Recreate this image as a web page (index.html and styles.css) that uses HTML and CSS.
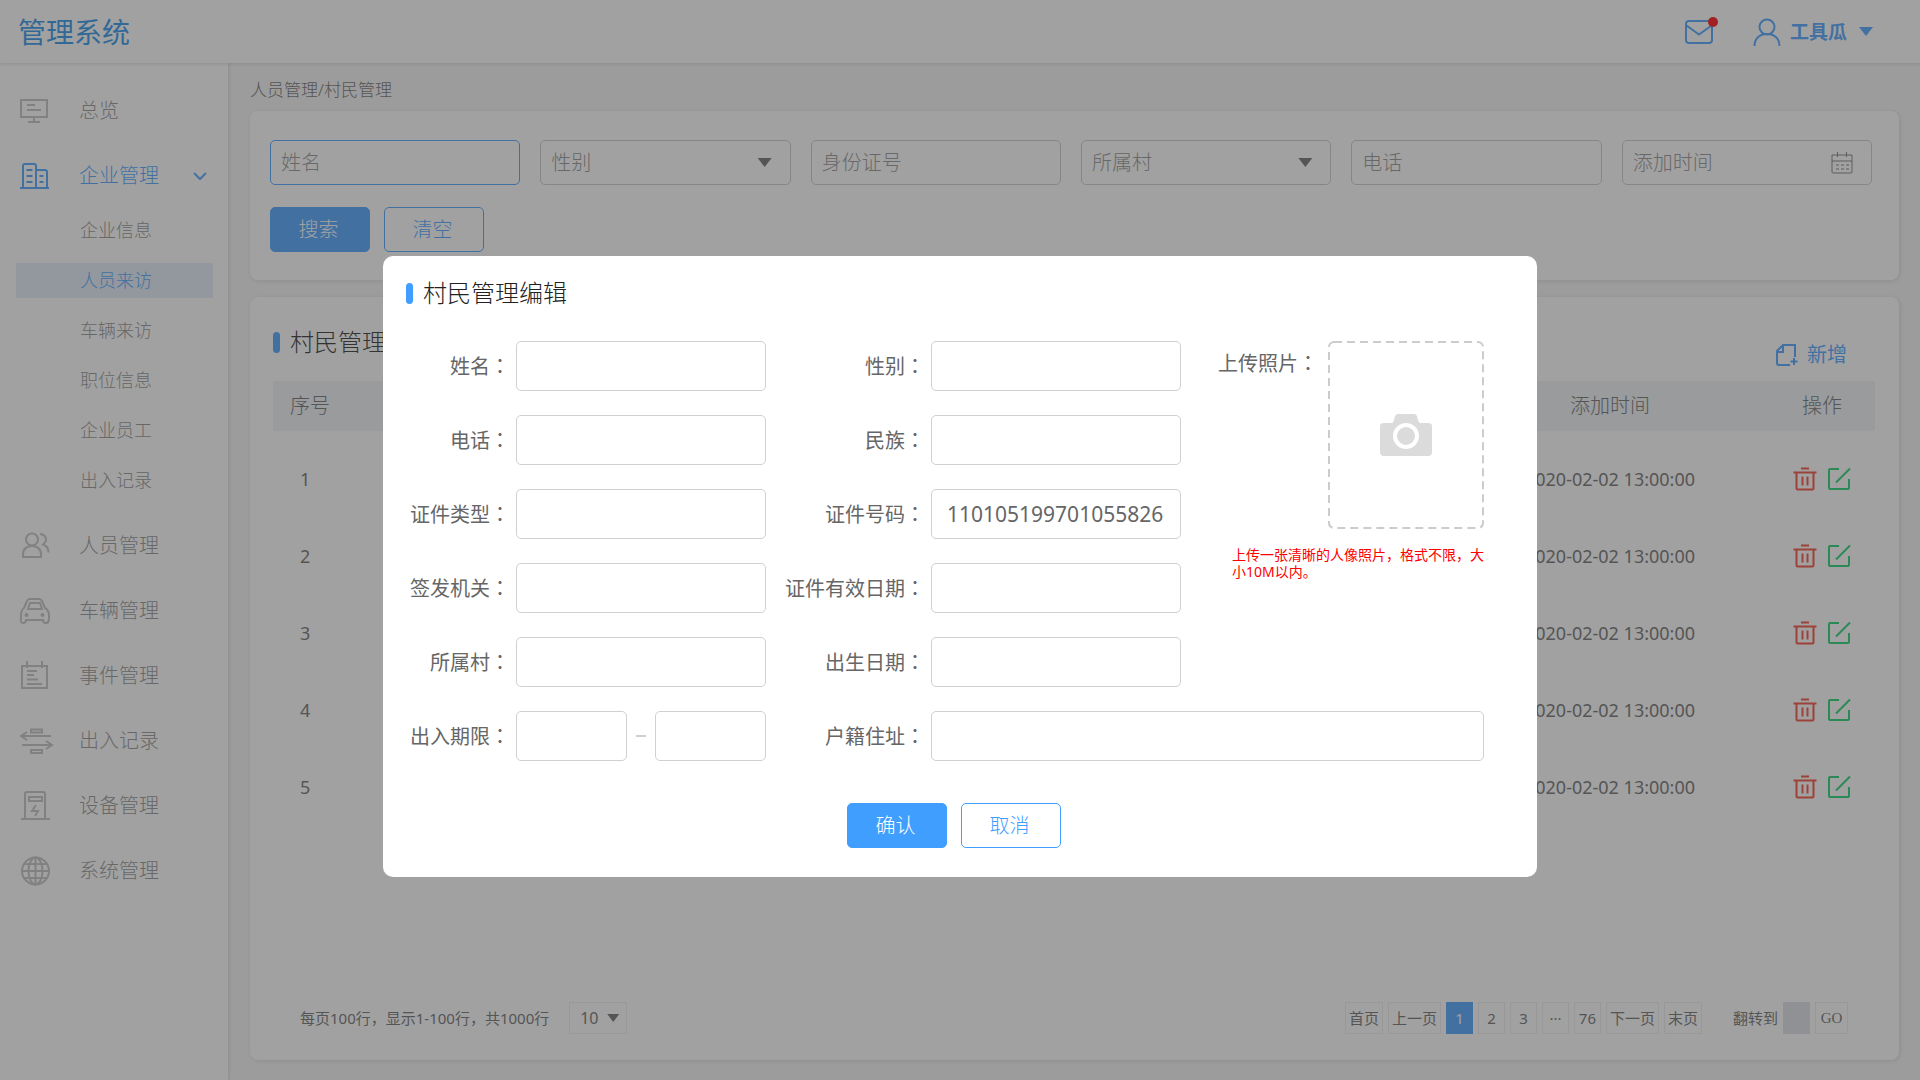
FILE: index.html
```html
<!DOCTYPE html>
<html lang="zh-CN">
<head>
<meta charset="utf-8">
<meta name="viewport" content="width=device-width, initial-scale=1">
<title>管理系统</title>
<link rel="stylesheet" href="styles.css">
</head>
<body>
<svg class="sprite" aria-hidden="true">
  <symbol id="i-trash" viewBox="0 0 24 24"><path d="M.5 5.500h23M8 1.500h8M3.500 5.500v16a1 1 0 0 0 1 1h15a1 1 0 0 0 1-1v-16M9.500 9.500v9M14.500 9.500v9"/></symbol>
  <symbol id="i-edit" viewBox="0 0 24 24"><path d="M12 2H3a1 1 0 0 0-1 1v18a1 1 0 0 0 1 1h18a1 1 0 0 0 1-1v-9M9 15.500 23 1.500"/></symbol>
</svg>

<header class="topbar">
  <a class="brand" href="#">管理系统</a>
  <div class="topbar-tools">
    <button class="mail" type="button" aria-label="消息">
      <svg width="28" height="24" viewBox="0 0 28 24"><rect x="1" y="1" width="26" height="22" rx="3"/><path d="m1.500 5.500 12.500 9 12.500-9"/></svg>
      <span class="mail-dot"></span>
    </button>
    <button class="user" type="button">
      <svg width="28" height="28" viewBox="0 0 28 28"><circle cx="14" cy="9" r="7.500"/><path d="M1.500 28c0-7.500 5-12 12.500-12s12.500 4.500 12.500 12"/></svg>
      <span>工具瓜</span>
      <i class="caret"></i>
    </button>
  </div>
</header>

<div class="shell">
  <nav class="sidebar">
    <ul class="menu">
      <li><a class="menu-item" href="#">
        <svg viewBox="0 0 30 30"><path d="M1 4h26v17H1zM7 9h8M7 14h14M14 21v4M8 26h12"/></svg>总览</a></li>
      <li><a class="menu-item active" href="#">
        <svg viewBox="0 0 30 30"><path d="M0 27h29M3 27V5a2 2 0 0 1 2-2h9a2 2 0 0 1 2 2v22M16 9h9a2 2 0 0 1 2 2v16M6.500 9h6M6.500 15h6M6.500 21h6M19.500 15h4M19.500 21h4"/></svg>企业管理
        <svg class="chevron" viewBox="0 0 14 8"><path d="m1 1 6 6 6-6"/></svg></a>
        <ul class="submenu">
          <li><a href="#">企业信息</a></li>
          <li><a class="current" href="#">人员来访</a></li>
          <li><a href="#">车辆来访</a></li>
          <li><a href="#">职位信息</a></li>
          <li><a href="#">企业员工</a></li>
          <li><a href="#">出入记录</a></li>
        </ul>
      </li>
      <li><a class="menu-item" href="#">
        <svg viewBox="0 0 30 30"><circle cx="12" cy="8.500" r="6"/><path d="M3 26v-3c0-5 4-8 9-8s9 3 9 8v3zM20 3c4 .5 6 2.500 6 5.500s-2 4-3 5c3 1 5.500 4 5.500 8"/></svg>人员管理</a></li>
      <li><a class="menu-item" href="#">
        <svg viewBox="0 0 30 30"><path d="M4 12 7 5q1-2 3-2h9q2 0 3 2l3 7q4 2 4 8v2q0 5-3 5t-3-3H6q0 3-3 3T1 22v-2q0-6 3-8zM10 7h10l2 6H8z"/><circle cx="6.500" cy="19" r="1"/><circle cx="22.500" cy="19" r="1"/></svg>车辆管理</a></li>
      <li><a class="menu-item" href="#">
        <svg viewBox="0 0 30 30"><path d="M2 5h25v22H2zM7 0v7M22 0v7M7 10h10M7 14h7M7 18.500h11M7 23h15"/></svg>事件管理</a></li>
      <li><a class="menu-item" href="#">
        <svg viewBox="0 0 30 30"><path d="M31 10H1M7 6l-6 4 6 4M2 19h30M26 15l6 4-6 4M11 3.500h11v3H11zM11 24h11v3H11z"/></svg>出入记录</a></li>
      <li><a class="menu-item" href="#">
        <svg viewBox="0 0 30 30"><path d="M1 28h29M5 28V3a2 2 0 0 1 2-2h16a2 2 0 0 1 2 2v25M9 6h13v4H9zM16 14l-4 6h6l-3 5"/></svg>设备管理</a></li>
      <li><a class="menu-item" href="#">
        <svg viewBox="0 0 30 30"><circle cx="15.500" cy="15" r="13.500"/><ellipse cx="15.500" cy="15" rx="7" ry="13.500"/><path d="M15.500 1.500v27M2 15h27M4 8h23M4 22h23"/></svg>系统管理</a></li>
    </ul>
  </nav>

  <main class="content">
    <div class="breadcrumb">人员管理/村民管理</div>

    <form class="panel filters">
      <div class="filter-grid">
        <input class="field focused" type="text" placeholder="姓名" aria-label="姓名">
        <div class="field-wrap">
          <select class="field" aria-label="性别"><option>性别</option></select>
          <i class="caret dark"></i>
        </div>
        <input class="field" type="text" placeholder="身份证号" aria-label="身份证号">
        <div class="field-wrap">
          <select class="field" aria-label="所属村"><option>所属村</option></select>
          <i class="caret dark"></i>
        </div>
        <input class="field" type="text" placeholder="电话" aria-label="电话">
        <div class="field-wrap">
          <input class="field" type="text" placeholder="添加时间" aria-label="添加时间">
          <svg class="calendar" width="22" height="22" viewBox="0 0 22 22"><path d="M1 3h20v17a1 1 0 0 1-1 1H2a1 1 0 0 1-1-1zM1 9h20M6.500 0v5M15.500 0v5"/><path d="M5 13h13M5 17h13" stroke-dasharray="3 2"/></svg>
        </div>
      </div>
      <div class="button-row">
        <button class="btn primary" type="button">搜索</button>
        <button class="btn" type="button">清空</button>
      </div>
    </form>

    <section class="panel list">
      <h2 class="heading">村民管理</h2>
      <div class="list-tools">
        <button class="add" type="button">
          <svg width="22" height="22" viewBox="0 0 22 22"><path d="M14 21H3a2 2 0 0 1-2-2V7l6-6h12v12M1 8h6V1M18 14v7M14.500 17.500h7"/></svg>新增
        </button>
      </div>
      <table class="grid">
        <colgroup><col class="c-no"><col><col class="c-time"><col class="c-op"></colgroup>
        <thead><tr><th class="no">序号</th><th></th><th>添加时间</th><th class="op">操作</th></tr></thead>
        <tbody>
          <tr><td class="no">1</td><td></td><td>2020-02-02 13:00:00</td><td class="op"><div class="ops"><button class="icon-btn del" type="button" aria-label="删除"><svg><use href="#i-trash"/></svg></button><button class="icon-btn edit" type="button" aria-label="编辑"><svg><use href="#i-edit"/></svg></button></div></td></tr>
          <tr><td class="no">2</td><td></td><td>2020-02-02 13:00:00</td><td class="op"><div class="ops"><button class="icon-btn del" type="button" aria-label="删除"><svg><use href="#i-trash"/></svg></button><button class="icon-btn edit" type="button" aria-label="编辑"><svg><use href="#i-edit"/></svg></button></div></td></tr>
          <tr><td class="no">3</td><td></td><td>2020-02-02 13:00:00</td><td class="op"><div class="ops"><button class="icon-btn del" type="button" aria-label="删除"><svg><use href="#i-trash"/></svg></button><button class="icon-btn edit" type="button" aria-label="编辑"><svg><use href="#i-edit"/></svg></button></div></td></tr>
          <tr><td class="no">4</td><td></td><td>2020-02-02 13:00:00</td><td class="op"><div class="ops"><button class="icon-btn del" type="button" aria-label="删除"><svg><use href="#i-trash"/></svg></button><button class="icon-btn edit" type="button" aria-label="编辑"><svg><use href="#i-edit"/></svg></button></div></td></tr>
          <tr><td class="no">5</td><td></td><td>2020-02-02 13:00:00</td><td class="op"><div class="ops"><button class="icon-btn del" type="button" aria-label="删除"><svg><use href="#i-trash"/></svg></button><button class="icon-btn edit" type="button" aria-label="编辑"><svg><use href="#i-edit"/></svg></button></div></td></tr>
        </tbody>
      </table>
      <footer class="list-foot">
        <span class="summary">每页100行，显示1-100行，共1000行</span>
        <div class="page-size">
          <select aria-label="每页行数"><option>10</option></select>
          <i class="caret dark"></i>
        </div>
        <div class="pager">
          <button class="page" type="button">首页</button>
          <button class="page" type="button">上一页</button>
          <button class="page on" type="button">1</button>
          <button class="page" type="button">2</button>
          <button class="page" type="button">3</button>
          <button class="page" type="button">···</button>
          <button class="page" type="button">76</button>
          <button class="page" type="button">下一页</button>
          <button class="page" type="button">末页</button>
          <label class="jump-label" for="jump">翻转到</label>
          <input class="jump" id="jump" type="text">
          <button class="page go" type="button">GO</button>
        </div>
      </footer>
    </section>
  </main>
</div>

<div class="overlay">
  <form class="modal" role="dialog" aria-modal="true" aria-labelledby="modal-title">
    <h2 class="heading" id="modal-title">村民管理编辑</h2>
    <div class="form-grid">
      <label for="f-name">姓名<span class="mid">：</span></label><input id="f-name" type="text">
      <label for="f-sex">性别<span class="mid">：</span></label><input id="f-sex" type="text">

      <div class="photo">
        <div class="photo-row">
          <span class="photo-label">上传照片<span class="mid">：</span></span>
          <button class="upload" type="button" aria-label="上传照片">
            <svg class="frame" width="156" height="188"><rect x="1" y="1" width="154" height="186" rx="5"/></svg>
            <svg width="52" height="42" viewBox="0 0 52 42"><path fill="#dbdbdb" d="M4 9h8q1 0 2-3l1-4q1-2 3-2h16q2 0 3 2l1 4q1 3 2 3h8q4 0 4 3v26q0 4-4 4H4q-4 0-4-4V12q0-3 4-3z"/><circle class="lens" cx="26" cy="22" r="11"/></svg>
          </button>
        </div>
        <p class="hint">上传一张清晰的人像照片，格式不限，大小10M以内。</p>
      </div>

      <label for="f-tel">电话<span class="mid">：</span></label><input id="f-tel" type="text">
      <label for="f-nation">民族<span class="mid">：</span></label><input id="f-nation" type="text">
      <label for="f-type">证件类型<span class="mid">：</span></label><input id="f-type" type="text">
      <label for="f-id">证件号码<span class="mid">：</span></label><input id="f-id" type="text" value="110105199701055826">
      <label for="f-org">签发机关<span class="mid">：</span></label><input id="f-org" type="text">
      <label for="f-valid">证件有效日期<span class="mid">：</span></label><input id="f-valid" type="text">
      <label for="f-village">所属村<span class="mid">：</span></label><input id="f-village" type="text">
      <label for="f-birth">出生日期<span class="mid">：</span></label><input id="f-birth" type="text">
      <label class="first" for="f-from">出入期限<span class="mid">：</span></label>
      <div class="range"><input id="f-from" type="text"><i class="dash"></i><input type="text" aria-label="出入期限结束"></div>
      <label for="f-addr">户籍住址<span class="mid">：</span></label><input class="wide" id="f-addr" type="text">
    </div>
    <div class="button-row modal-actions">
      <button class="btn primary" type="button">确认</button>
      <button class="btn" type="button">取消</button>
    </div>
  </form>
</div>
</body>
</html>
```
FILE: styles.css
```css
:root {
  --blue: #409eff;
  --text: #666;
  --muted: #8c8c8c;
  --line: #d0d0d0;
}

* { box-sizing: border-box; }

body {
  margin: 0;
  min-height: 100vh;
  display: flex;
  flex-direction: column;
  background: #f4f4f4;
  color: var(--text);
  font: 300 20px/30px "Noto Sans", "Noto Sans CJK SC", sans-serif;
}

ul, h2, p { margin: 0; padding: 0; list-style: none; }
a { color: inherit; text-decoration: none; }
button, input, select { font: inherit; color: inherit; margin: 0; outline: 0; }
button { background: none; border: 0; padding: 0; cursor: pointer; }
svg { fill: none; stroke: currentColor; stroke-width: 2; flex: none; display: block; }
.sprite { position: absolute; width: 0; height: 0; }

/* full-width colon centred in its cell */
.mid { font-family: "Noto Sans CJK TC", sans-serif; font-feature-settings: "locl" 0; }

.caret {
  width: 14px;
  height: 9px;
  background: currentColor;
  clip-path: polygon(0 0, 100% 0, 50% 100%);
}
.caret.dark { color: #666; }

/* top bar */
.topbar {
  height: 63px;
  padding: 0 47px 0 18px;
  display: flex;
  align-items: center;
  justify-content: space-between;
  background: #fff;
  box-shadow: 0 1px 3px rgba(0, 0, 0, .15);
  z-index: 1;
}
.brand { font-size: 28px; font-weight: 400; color: #1f8ee8; }
.topbar-tools { display: flex; align-items: center; gap: 40px; color: var(--blue); }
.mail { position: relative; }
.mail-dot {
  position: absolute;
  top: -3px;
  right: -5px;
  width: 10px;
  height: 10px;
  border-radius: 50%;
  background: #f00;
}
.user { display: flex; align-items: center; gap: 9px; font-size: 19px; font-weight: 700; }
.user .caret { margin-left: 3px; }

/* layout */
.shell { flex: 1; display: flex; }
.sidebar {
  flex: 0 0 228px;
  padding: 18px 0;
  background: #fff;
  box-shadow: 1px 0 3px rgba(0, 0, 0, .12);
}
.content {
  flex: 1;
  min-width: 0;
  padding: 12px 21px 20px 22px;
  display: flex;
  flex-direction: column;
}

/* side menu */
.menu { display: flex; flex-direction: column; gap: 5px; color: var(--muted); }
.menu-item { height: 60px; padding: 0 21px 0 20px; display: flex; align-items: center; }
.menu-item svg { width: 30px; height: 30px; margin-right: 29px; color: #bfbfbf; overflow: visible; }
.menu-item.active, .menu-item.active svg { color: var(--blue); }
.menu-item .chevron { width: 14px; height: 8px; margin: 0 0 0 auto; }
.submenu { padding-bottom: 5px; font-size: 18px; }
.submenu li { padding: 7px 15px 8px 16px; }
.submenu a { display: block; padding-left: 64px; line-height: 35px; }
.submenu .current { background: #e3ecf8; color: var(--blue); }

/* panels */
.breadcrumb { font-size: 17px; margin-bottom: 6px; }
.panel { background: #fff; border-radius: 8px; box-shadow: 1px 1px 4px rgba(0, 0, 0, .12); }
.heading {
  display: flex;
  align-items: center;
  gap: 10px;
  font-size: 24px;
  font-weight: 300;
  line-height: 36px;
  color: #222;
}
.heading::before { content: ""; width: 7px; height: 21px; border-radius: 4px; background: var(--blue); }

.filters { padding: 29px 27px 28px 20px; }
.filter-grid { display: grid; grid-template-columns: repeat(6, 1fr); gap: 20px; }
.field-wrap { display: grid; align-items: center; }
.field-wrap > * { grid-area: 1 / 1; }
.field-wrap .caret { justify-self: end; margin-right: 19px; }
.calendar { justify-self: end; margin-right: 19px; stroke-width: 1; color: #777; }
.field {
  width: 100%;
  min-width: 0;
  height: 45px;
  padding: 0 10px;
  border: 1px solid #c8c8c8;
  border-radius: 5px;
  background: transparent;
  color: var(--muted);
  appearance: none;
}
.field::placeholder { color: var(--muted); opacity: 1; }
.field.focused { border-color: var(--blue); }

.button-row { display: flex; gap: 14px; margin-top: 22px; }
.btn {
  width: 100px;
  height: 45px;
  padding-right: 3px;
  border: 1px solid var(--blue);
  border-radius: 5px;
  color: var(--blue);
}
.btn.primary { background: var(--blue); color: #fff; }

/* resident list */
.list {
  flex: 1;
  margin-top: 17px;
  padding: 27px 24px 26px 23px;
  display: flex;
  flex-direction: column;
}
.list-tools { display: flex; justify-content: flex-end; padding: 0 28px 11px 0; margin-top: -20px; }
.add { display: flex; align-items: center; gap: 9px; color: var(--blue); font-weight: 400; }
.grid { width: 100%; table-layout: fixed; border-spacing: 0; text-align: center; }
.grid .c-no { width: 120px; }
.grid .c-time { width: 318px; }
.grid .c-op { width: 106px; }
.grid th {
  height: 59px;
  padding: 0;
  font-weight: 300;
  background: #eff2f7;
  background-clip: padding-box;
  border-bottom: 9px solid transparent;
}
.grid td { height: 77px; padding: 0; font-size: 18px; font-weight: 400; }
.grid .no { text-align: left; padding-left: 17px; }
.grid td.no { padding-left: 27px; }
.ops { display: flex; justify-content: center; gap: 10px; }
.icon-btn svg { width: 24px; height: 24px; }
.del { color: #f5402d; }
.edit { color: #13ce66; }

.list-foot {
  margin-top: auto;
  padding: 0 27px;
  display: flex;
  align-items: center;
  font-size: 15px;
  font-weight: 400;
}
.page-size { display: grid; align-items: center; width: 58px; margin-left: 20px; }
.page-size > * { grid-area: 1 / 1; }
.page-size select {
  height: 32px;
  padding: 0 10px;
  border: 1px solid #ececec;
  background: transparent;
  appearance: none;
  font-size: 16px;
}
.page-size .caret { justify-self: end; width: 12px; height: 8px; margin-right: 8px; }
.pager { margin-left: auto; display: flex; align-items: center; gap: 5px; }
.page { min-width: 27px; height: 32px; padding: 0 3px; border: 1px solid #ececec; }
.page.on { background: var(--blue); border-color: var(--blue); color: #fff; }
.jump-label { margin-left: 26px; }
.jump { width: 27px; height: 32px; border: 0; background: #dcdfe6; }
.go { width: 33px; font-family: "Liberation Serif", serif; }

/* edit dialog */
.overlay {
  position: fixed;
  inset: 0;
  z-index: 10;
  padding: 256px 20px 20px;
  display: flex;
  align-items: flex-start;
  justify-content: center;
  overflow: auto;
  background: rgba(68, 68, 68, .5);
}
.modal {
  width: 1154px;
  max-width: 100%;
  padding: 19px 53px 29px 20px;
  border-radius: 10px;
  background: #fff;
}
.modal .heading { padding-left: 3px; }
.form-grid {
  margin-top: 30px;
  display: grid;
  grid-template-columns: 113px 1fr 165px 1fr 147px 156px;
  grid-auto-rows: 50px;
  row-gap: 24px;
  align-items: center;
}
.form-grid label { text-align: right; padding-right: 6px; font-weight: 400; white-space: nowrap; }
.form-grid .first { grid-column: 1; }
.form-grid input {
  width: 100%;
  min-width: 0;
  height: 50px;
  padding: 0 15px;
  border: 1px solid var(--line);
  border-radius: 5px;
  font-size: 21px;
  font-weight: 400;
}
.form-grid .wide { grid-column: 4 / 7; }
.range { display: grid; grid-template-columns: 1fr 28px 1fr; align-items: center; justify-items: center; }
.dash { width: 10px; height: 2px; background: var(--line); }
.photo { grid-column: 5 / 7; grid-row: 1 / 5; align-self: start; }
.photo-row { display: flex; justify-content: flex-end; gap: 10px; }
.photo-label { padding-top: 7px; font-weight: 400; }
.upload { display: grid; place-items: center; }
.upload > * { grid-area: 1 / 1; }
.upload svg:not(.frame) { stroke: none; }
.upload .lens { fill: #dbdbdb; stroke: #fff; stroke-width: 4; }
.frame { stroke: #ccc; stroke-dasharray: 8 5; }
.hint { width: 252px; margin: 17px 0 0 auto; font-size: 14px; font-weight: 400; line-height: 17px; color: #f00; line-break: anywhere; }
.modal-actions { justify-content: center; margin-top: 42px; padding-left: 21px; }
```
